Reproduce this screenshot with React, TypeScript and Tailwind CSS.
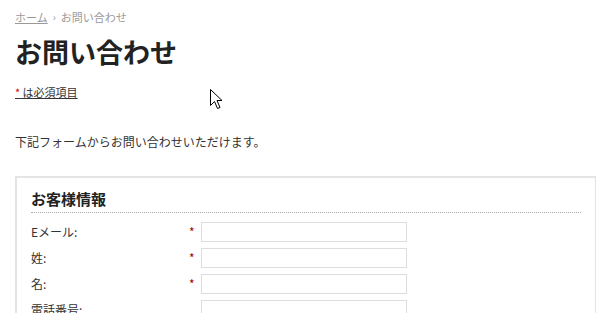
import React from "react";

const fields = [
  { label: "Eメール:", required: true },
  { label: "姓:", required: true },
  { label: "名:", required: true },
  { label: "電話番号:", required: false },
];

function Cursor() {
  return (
    <svg
      className="absolute left-[210px] top-[89px]"
      width="13"
      height="21"
      viewBox="0 0 13 21"
    >
      <path
        d="M0.5 0.5 L0.5 16.5 L4.5 12.5 L7.5 19.5 L10 18.5 L7 11.5 L12 11.5 Z"
        fill="#fff"
        stroke="#000"
        strokeWidth="1"
      />
    </svg>
  );
}

export default function App() {
  return (
    <div
      className="relative w-[601px] h-[313px] overflow-hidden bg-white text-[#333]"
      style={{ fontFamily: '"Noto Sans CJK JP", "Noto Sans", sans-serif' }}
    >
      <div className="px-[15px] pt-[9px]">
        {/* breadcrumb */}
        <div className="flex items-center text-[11px] leading-[16px] text-[#999]">
          <span className="underline">ホーム</span>
          <span className="mx-[5px] text-[10px]">›</span>
          <span>お問い合わせ</span>
        </div>

        <h1 className="mt-[10px] text-[27px] leading-[34px] font-bold text-[#222]">
          お問い合わせ
        </h1>

        <div className="mt-[15px] text-[11px] leading-[16px]">
          <span className="underline">
            <span className="text-[#c00]">*</span> は必須項目
          </span>
        </div>

        <p className="mt-[33px] text-[12px] leading-[18px]">
          下記フォームからお問い合わせいただけます。
        </p>

        <div className="mt-[25px] w-[581px] border-2 border-r border-[#e4e4e4] px-[14px] pt-[10px] pb-[10px]">
          <div className="border-b border-dotted border-[#aaa] pb-[2px] w-[550px]">
            <h2 className="text-[15px] leading-[22px] font-bold text-[#222]">
              お客様情報
            </h2>
          </div>
          <div className="mt-[9px] flex flex-col gap-[6px]">
            {fields.map((f) => (
              <div key={f.label} className="flex items-center h-[20px]">
                <div className="w-[158px] text-[12px] leading-[16px]">
                  {f.label}
                </div>
                <div className="w-[12px] text-[12px] text-[#a00] leading-[16px]">
                  {f.required ? "*" : ""}
                </div>
                <input
                  type="text"
                  className="w-[206px] h-[20px] border border-[#ddd] bg-white outline-none"
                />
              </div>
            ))}
          </div>
        </div>
      </div>
      <Cursor />
    </div>
  );
}
